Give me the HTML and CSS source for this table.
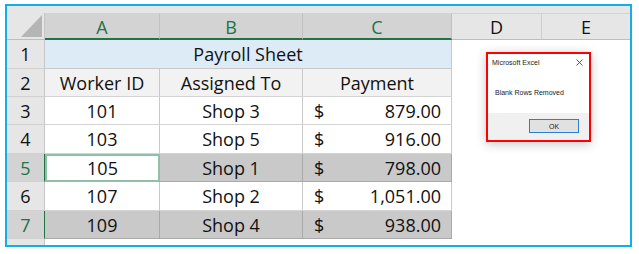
FILE: index.html
```html
<!DOCTYPE html>
<html>
<head>
<meta charset="utf-8">
<link rel="stylesheet" href="styles.css">
</head>
<body>
<div class="frame">
  <div class="strip"></div>
  <div class="sheet">
    <div class="corner"><div class="tri"></div></div>
    <div class="ch sel">A</div>
    <div class="ch sel">B</div>
    <div class="ch sel">C</div>
    <div class="ch">D</div>
    <div class="ch last">E</div>

    <div class="rh">1</div>
    <div class="c title span3">Payroll Sheet</div>
    <div class="blank"></div><div class="blank"></div>

    <div class="rh">2</div>
    <div class="c hd">Worker ID</div>
    <div class="c hd">Assigned To</div>
    <div class="c hd">Payment</div>
    <div class="blank"></div><div class="blank"></div>

    <div class="rh">3</div>
    <div class="c">101</div>
    <div class="c">Shop 3</div>
    <div class="c money"><span>$</span><span>879.00</span></div>
    <div class="blank"></div><div class="blank"></div>

    <div class="rh">4</div>
    <div class="c">103</div>
    <div class="c">Shop 5</div>
    <div class="c money"><span>$</span><span>916.00</span></div>
    <div class="blank"></div><div class="blank"></div>

    <div class="rh rsel">5</div>
    <div class="c active">105</div>
    <div class="c g">Shop 1</div>
    <div class="c money g"><span>$</span><span>798.00</span></div>
    <div class="blank"></div><div class="blank"></div>

    <div class="rh">6</div>
    <div class="c">107</div>
    <div class="c">Shop 2</div>
    <div class="c money"><span>$</span><span>1,051.00</span></div>
    <div class="blank"></div><div class="blank"></div>

    <div class="rh rsel">7</div>
    <div class="c g">109</div>
    <div class="c g">Shop 4</div>
    <div class="c money g"><span>$</span><span>938.00</span></div>
    <div class="blank"></div><div class="blank"></div>

    <div class="rh end"></div>
    <div class="blank"></div><div class="blank"></div><div class="blank"></div><div class="blank"></div><div class="blank"></div>
  </div>

  <div class="dialog">
    <div class="dtitle"><span>Microsoft Excel</span>
      <svg class="x" width="7" height="7" viewBox="0 0 7 7"><path d="M0.5 0.5L6.5 6.5M6.5 0.5L0.5 6.5" stroke="#333" stroke-width="0.8" fill="none"/></svg>
    </div>
    <div class="dmsg">Blank Rows Removed</div>
    <div class="dfoot"><div class="ok">OK</div></div>
  </div>
</div>
</body>
</html>
```

FILE: styles.css
```css
html, body {
  margin: 0;
  padding: 0;
  background: #ffffff;
}
.frame {
  position: relative;
  margin: 4px 0 0 5px;
  width: 623px;
  height: 239px;
  border: 2px solid #12aee8;
  overflow: hidden;
  font-family: "Open Sans", "Liberation Sans", sans-serif;
  color: #111111;
}
.strip {
  height: 7px;
  background: #e6e6e6;
}
.sheet {
  display: grid;
  grid-template-columns: 38px 115px 143px 149px 90px 1fr;
  grid-template-rows: 27px 29px 28px 28px 29px 28px 29px 28px 1fr;
  height: 232px;
  font-size: 18px;
}
.corner {
  background: #e6e6e6;
  border-right: 1px solid #c6c6c6;
  border-bottom: 1px solid #bdbdbd;
  display: flex;
  align-items: flex-end;
  justify-content: flex-end;
  box-sizing: border-box;
}
.tri {
  width: 21px;
  height: 22px;
  margin: 0 2px 2px 0;
  background: #b5b5b5;
  clip-path: polygon(100% 0, 100% 100%, 0 100%);
}
.ch {
  background: #e6e6e6;
  border-top: 1px solid #d4d4d4;
  border-right: 1px solid #cfcfcf;
  border-bottom: 1px solid #bdbdbd;
  box-sizing: border-box;
  display: flex;
  align-items: center;
  justify-content: center;
  line-height: 1;
  padding-top: 1px;
}
.ch.sel {
  background: #d3d3d3;
  color: #217346;
  border-right-color: #c0c0c0;
  border-bottom: 2px solid #217346;
  padding-top: 2px;
}
.ch.last { border-right: none; }
.rh {
  background: #e6e6e6;
  border-right: 1px solid #c6c6c6;
  border-bottom: 1px solid #d0d0d0;
  box-sizing: border-box;
  display: flex;
  align-items: center;
  justify-content: center;
  line-height: 1;
}
.rh.rsel {
  background: #d3d3d3;
  color: #217346;
  border-right: 1px solid #217346;
}
.rh.end { border-bottom: none; }
.c {
  border-right: 1px solid #c9c9c9;
  border-bottom: 1px solid #d4d4d4;
  box-sizing: border-box;
  display: flex;
  align-items: center;
  justify-content: center;
  line-height: 1;
  background: #ffffff;
}
.c.span3 { grid-column: span 3; }
.c.title { background: #ddebf7; border-bottom-color: #c9c9c9; }
.c.hd { background: #f2f2f2; }
.c.g {
  background: #c9c9c9;
  border-right-color: #a9a9a9;
  border-bottom-color: #a9a9a9;
}
.c.money {
  justify-content: space-between;
  padding: 0 10px 0 11px;
}
.c.active {
  border: 2px solid #8fc0a5;
}
.blank { background: #ffffff; }

.dialog {
  position: absolute;
  left: 479px;
  top: 46px;
  width: 101px;
  height: 86px;
  border: 2px solid #ff0000;
  background: #ffffff;
  box-shadow: 0 2px 10px rgba(0,0,0,0.22);
  display: flex;
  flex-direction: column;
  font-family: "Liberation Sans", sans-serif;
  font-size: 7px;
  color: #222;
}
.dtitle {
  height: 17px;
  display: flex;
  align-items: center;
  justify-content: space-between;
  padding: 0 6px 0 4px;
}
.x { display: block; }
.dmsg {
  flex: 1;
  padding: 18px 0 0 7px;
}
.dfoot {
  height: 27px;
  background: #f0f0f0;
  display: flex;
  justify-content: flex-end;
  align-items: flex-start;
  padding: 6px 10px 0 0;
  box-sizing: border-box;
}
.ok {
  width: 50px;
  height: 14px;
  box-sizing: border-box;
  border: 1px solid #2a7fd4;
  background: #e1e1e1;
  display: flex;
  align-items: center;
  justify-content: center;
  font-size: 7px;
}
```
